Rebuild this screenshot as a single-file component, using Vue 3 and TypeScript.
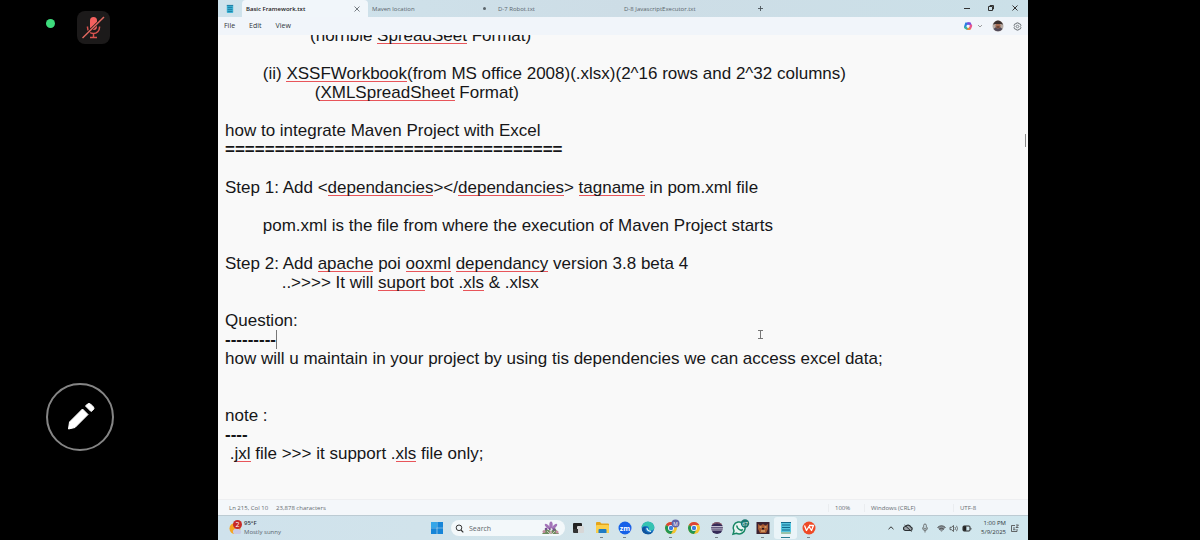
<script setup lang="ts">
import { ref } from 'vue'

interface Tab { title: string; modified?: boolean }
interface Piece { text: string; misspelt?: boolean }
interface Line { pieces: Piece[]; caret: boolean; rule: boolean }

const tabs: Tab[] = [
  { title: 'Basic Framework.txt' },
  { title: 'Maven location', modified: true },
  { title: 'D-7 Robot.txt' },
  { title: 'D-8 JavascriptExecutor.txt' },
]
const activeTab = ref(0)
const menus = ['File', 'Edit', 'View']

// Words wrapped in [[ ]] carry the spell-check underline; a trailing | marks the caret.
const source: string[] = [
  ' '.repeat(18) + '(horrible [[SpreadSeet]] Format)',
  '',
  ' '.repeat(8) + '(ii) [[XSSFWorkbook]](from MS office 2008)(.xlsx)(2^16 rows and 2^32 columns)',
  ' '.repeat(19) + '([[XMLSpreadSheet]] Format)',
  '',
  'how to integrate Maven Project with Excel',
  '='.repeat(34),
  '',
  'Step 1: Add <[[dependancies]]></[[dependancies]]> [[tagname]] in pom.xml file',
  '',
  ' '.repeat(8) + 'pom.xml is the file from where the execution of Maven Project starts',
  '',
  'Step 2: Add [[apache]] poi [[ooxml]] [[dependancy]] version 3.8 beta 4',
  ' '.repeat(12) + '..>>>> It will [[suport]] bot .[[xls]] & .xlsx',
  '',
  'Question:',
  '-'.repeat(9) + '|',
  'how will u maintain in your project by using tis dependencies we can access excel data;',
  '',
  '',
  'note :',
  '----',
  ' .[[jxl]] file >>> it support .[[xls]] file only;',
]

function parse(raw: string): Line {
  const caret = raw.endsWith('|')
  const body = caret ? raw.slice(0, -1) : raw
  const pieces = body
    .split(/(\[\[.*?\]\])/)
    .filter((t) => t.length > 0)
    .map((t) => (t.startsWith('[[') ? { text: t.slice(2, -2), misspelt: true } : { text: t }))
  return { pieces, caret, rule: /^[-=]+$/.test(body) }
}
const lines = source.map(parse)

const apps: { id: string; label: string; running?: boolean }[] = [
  { id: 'taskview', label: 'Task view' },
  { id: 'explorer', label: 'File Explorer', running: true },
  { id: 'zoom', label: 'Zoom', running: true },
  { id: 'edge', label: 'Edge' },
  { id: 'chromeM', label: 'Chrome profile', running: true },
  { id: 'chrome', label: 'Chrome' },
  { id: 'eclipse', label: 'Eclipse', running: true },
  { id: 'whatsapp', label: 'WhatsApp' },
  { id: 'photo', label: 'Game', running: true },
  { id: 'notepad', label: 'Notepad', running: true },
  { id: 'wps', label: 'WPS Office', running: true },
]
</script>

<template>
  <div class="call">
    <aside class="side">
      <div class="mic-row">
        <span class="live"></span>
        <button class="mic" aria-label="Unmute">
          <svg viewBox="0 0 33 33" width="33" height="33">
            <rect x="13" y="6" width="7" height="13" rx="3.5" fill="#f4605e" />
            <path d="M10.500 15.500v1a6 6 0 0 0 12 0v-1M16.500 22.500v4M13 26.500h7" fill="none" stroke="#d9534f" stroke-width="1.500" />
            <path d="M6 26.500 27 6" stroke="#1c1a1a" stroke-width="3" />
            <path d="M5.500 27 27 6" stroke="#e0685f" stroke-width="1.500" />
          </svg>
        </button>
      </div>
      <button class="pen" aria-label="Annotate">
        <svg viewBox="0 0 68 68" width="68" height="68">
          <circle cx="34" cy="34" r="33" fill="#000" stroke="#858585" stroke-width="2" />
          <path d="M22.500 46 23.500 39 36.500 26 42 31.500 29 44.500Z" fill="#fff" stroke="#fff" stroke-linejoin="round" />
          <path d="M39.500 23 41.500 21q1.500-1 3 0l3 3q1 1.500 0 2.500L45 28.500Z" fill="#fff" stroke="#fff" stroke-linejoin="round" />
        </svg>
      </button>
    </aside>

    <main class="desktop">
      <header class="tabbar">
        <span class="app-icon">
          <svg viewBox="0 0 10 12" width="8" height="10">
            <rect x="1" y="1" width="8" height="10" rx="1" fill="#3eb5d6" />
            <path d="M1 1.500h8M2 4h6M2 6.500h6M2 9h6" stroke="#176f96" />
          </svg>
        </span>
        <div
          v-for="(tab, i) in tabs"
          :key="tab.title"
          class="tab"
          :class="{ active: i === activeTab }"
        >
          <button class="tab-title" @click="activeTab = i">{{ tab.title }}</button>
          <button v-if="i === activeTab" class="tab-close" aria-label="Close tab">
            <svg viewBox="0 0 6 6" width="6" height="6"><path d="M.5.5l5 5M5.500.5l-5 5" stroke="#555c62" stroke-width=".8" /></svg>
          </button>
          <span v-else-if="tab.modified" class="dot"></span>
        </div>
        <button class="new-tab" aria-label="New tab">
          <svg viewBox="0 0 7 7" width="7" height="7"><path d="M3.500 1v5M1 3.500h5" stroke="#4b5359" stroke-width=".9" /></svg>
        </button>
        <div class="window-controls">
          <button aria-label="Minimize"><svg viewBox="0 0 8 8" width="8" height="8"><path d="M1 4.500h6" stroke="#333" /></svg></button>
          <button aria-label="Restore">
            <svg viewBox="0 0 8 8" width="8" height="8"><path d="M1.500 2.500h4v4h-4zM3 2.500V1.500h3.500V5H5.500" fill="none" stroke="#333" /></svg>
          </button>
          <button aria-label="Close"><svg viewBox="0 0 8 8" width="8" height="8"><path d="M1.500 1.500l5 5M6.500 1.500l-5 5" stroke="#333" /></svg></button>
        </div>
      </header>

      <nav class="menubar">
        <button v-for="m in menus" :key="m">{{ m }}</button>
        <div class="menu-right">
          <button class="copilot" aria-label="Copilot">
            <svg viewBox="0 0 10 10" width="10" height="10">
              <g fill="none" stroke-width="2.400" stroke-linecap="round">
                <path d="M2.200 5.800 3.200 2.800h2" stroke="#2a7de1" />
                <path d="M5.200 2.400 6.700 2.500 7.300 3.500" stroke="#7c4ddb" />
                <path d="M8 4.700 7 7.300" stroke="#e9568d" />
                <path d="M6.300 7.900H4.700" stroke="#f08a3c" />
                <path d="M3.500 7.400 2.300 6.500" stroke="#37b5a0" />
              </g>
              <circle cx="5" cy="5.100" r="1.400" fill="#f6f8fb" />
            </svg>
            <svg viewBox="0 0 6 6" width="6" height="6"><path d="M1 2l2 2 2-2" fill="none" stroke="#888" stroke-width=".8" /></svg>
          </button>
          <button aria-label="Account">
            <svg viewBox="0 0 12 12" width="12" height="12">
              <circle cx="6" cy="6" r="5.500" fill="#b5aaa4" />
              <path d="M1.500 9a5.500 5.500 0 0 0 9 0L8 7H4z" fill="#514a58" />
              <circle cx="6" cy="5.800" r="2.600" fill="#a86f55" />
              <path d="M1 4.500Q3 .5 6 .5t5 4L8.500 4H3.500z" fill="#3b302e" />
              <path d="M4.500 7h3" stroke="#3b2622" />
            </svg>
          </button>
          <button aria-label="Settings">
            <svg viewBox="0 0 10 10" width="9" height="9">
              <path d="M4 1h2l.5 1.200 1.400-.2 1 1.600L8 5l.9 1.400-1 1.600-1.400-.2L6 9H4l-.5-1.200L2.100 8l-1-1.600L2 5l-.9-1.400 1-1.600 1.400.2z" fill="none" stroke="#5e6469" stroke-width=".9" />
              <circle cx="5" cy="5" r="1.400" fill="none" stroke="#5e6469" stroke-width=".8" />
            </svg>
          </button>
        </div>
      </nav>

      <section class="editor">
        <div class="text" contenteditable="true" role="textbox" aria-multiline="true" aria-label="Text editor" spellcheck="false">
          <div v-for="(line, i) in lines" :key="i" class="line" :class="{ rule: line.rule }"><span
            v-for="(p, j) in line.pieces" :key="j" :class="{ misspelt: p.misspelt }">{{ p.text }}</span><i v-if="line.caret" class="caret"></i></div>
        </div>
        <span class="scroll-thumb"></span>
        <svg class="pointer" viewBox="0 0 7 11" width="7" height="11"><path d="M1 1.500h5M1 9.500h5M3.500 1.500v8" stroke="#777" fill="none" /></svg>
      </section>

      <footer class="statusbar">
        <span class="position">Ln 215, Col 10</span>
        <span class="count">23,878 characters</span>
        <span class="cell zoom">100%</span>
        <span class="cell ending">Windows (CRLF)</span>
        <span class="cell encoding">UTF-8</span>
      </footer>

      <div class="taskbar">
        <button class="weather">
          <svg viewBox="0 0 16 18" width="16" height="18">
            <circle cx="8" cy="9.500" r="5.500" fill="#f5a623" />
            <path d="M7 15a3 3 0 0 1 .5-5 3.500 3.500 0 0 1 5.500 1 2.200 2.200 0 0 1 0 4z" fill="#c9cbe8" />
            <circle cx="10.500" cy="5.500" r="4.500" fill="#c62b28" />
            <text x="10.500" y="8" text-anchor="middle" font-size="7" fill="#fff">2</text>
          </svg>
          <span class="weather-text"><b>95°F</b><span>Mostly sunny</span></span>
        </button>

        <div class="pins">
          <button class="start" aria-label="Start">
            <svg viewBox="0 0 14 14" width="14" height="14">
              <path d="M1 1h5.700v5.700H1zM7.300 1H13v5.700H7.300zM1 7.300h5.700V13H1zM7.300 7.300H13V13H7.300z" fill="#1685d8" />
              <path d="M1 1h5.700v5.700H1z" fill="#35a6e8" />
            </svg>
          </button>
          <label class="search">
            <svg viewBox="0 0 9 9" width="9" height="9"><circle cx="4" cy="3.800" r="2.800" fill="none" stroke="#333" /><path d="M6 6l2.300 2.300" stroke="#333" stroke-width="1.200" /></svg>
            <input type="text" placeholder="Search" aria-label="Search" />
            <svg viewBox="0 0 20 14" width="20" height="14">
              <path d="M1 13l4-5 5 2 4-3 4 6z" fill="#6d8b5e" />
              <g fill="#a374b8"><ellipse cx="10" cy="4" rx="1.700" ry="3.600" /><ellipse cx="6.500" cy="5.500" rx="1.500" ry="3.400" transform="rotate(-45 6.500 5.500)" /><ellipse cx="13.500" cy="5.500" rx="1.500" ry="3.400" transform="rotate(45 13.500 5.500)" /></g>
              <g fill="#76528f"><circle cx="5" cy="8" r="1.300" /><circle cx="13" cy="8.500" r="1.300" /><circle cx="9" cy="8" r="1.200" /></g>
              <g fill="#c58ba0"><circle cx="3" cy="10.500" r="1.500" /><circle cx="16" cy="11" r="1.500" /><circle cx="9.500" cy="11.500" r="1.300" /></g>
              <path d="M10 7v6M6 10l3 3M14 10l-3 3" stroke="#e9e9df" stroke-width=".7" />
            </svg>
          </label>

          <button v-for="app in apps" :key="app.id" class="pin" :class="[app.id, { running: app.running }]" :aria-label="app.label">
            <svg viewBox="0 0 20 18" width="20" height="18">
              <g v-if="app.id === 'taskview'">
                <rect x="4" y="4" width="9" height="9" rx="1" fill="#222" /><rect x="8" y="7" width="7" height="7" rx="1" fill="#d7d7d7" /><path d="M4 10h5v4H5q-1 0-1-1z" fill="#333" />
              </g>
              <g v-else-if="app.id === 'explorer'">
                <path d="M4 4q0-1 1-1h3l1.500 1.500H16q1 0 1 1V13q0 1-1 1H5q-1 0-1-1z" fill="#e5a51b" /><rect x="4" y="6" width="13" height="8" rx="1" fill="#fbd04b" /><path d="M6.500 14v-3q0-1 1-1h6q1 0 1 1v3z" fill="#1f7bc4" />
              </g>
              <g v-else-if="app.id === 'zoom'">
                <circle cx="10" cy="9" r="6.500" fill="#1560e8" /><text x="10" y="11.500" text-anchor="middle" font-size="7" font-weight="700" fill="#fff">zm</text>
              </g>
              <g v-else-if="app.id === 'edge'">
                <circle cx="10" cy="9" r="6.300" fill="#1677c9" />
                <path d="M3.700 9A6.300 6.300 0 0 1 16.300 8.500q0 3-3.500 3-2.500 0-1.800-1.500Q11 7 8 7 4.500 7 3.700 9z" fill="#35c3b1" />
                <path d="M8 8q-2 3 1 5.200 3 1.200 6-.7-2 3-5 2.800Q4 15 3.800 10 5 7 8 8z" fill="#11539c" /><path d="M9 9q0 3 4 3.300" stroke="#e1f5fa" stroke-width="1.300" fill="none" />
              </g>
              <g v-else-if="app.id === 'chrome' || app.id === 'chromeM'">
                <circle cx="10" cy="9" r="6" fill="#f4c430" />
                <path d="M10 9 4.800 6a6 6 0 0 1 10.400 0H10z" fill="#db4437" /><path d="M10 9 4.800 6a6 6 0 0 0 5.200 9l2.500-4.500z" fill="#219653" />
                <circle cx="10" cy="9" r="3" fill="#fff" /><circle cx="10" cy="9" r="2.200" fill="#3c7de0" />
                <g v-if="app.id === 'chromeM'"><circle cx="14.500" cy="4.500" r="4" fill="#6263a8" /><text x="14.500" y="6.500" text-anchor="middle" font-size="5" fill="#fff">M</text></g>
              </g>
              <g v-else-if="app.id === 'eclipse'">
                <circle cx="10" cy="9" r="6" fill="#342a57" /><path d="M4 7.500h12M4 9.200h12M4 11h12" stroke="#e7e4ed" stroke-width=".8" /><path d="M5 5.500Q10 2 15 5.500" fill="none" stroke="#a26a70" />
              </g>
              <g v-else-if="app.id === 'whatsapp'">
                <path d="M3 15.200 4 12a6 6 0 1 1 2.300 2.200z" fill="#e8f4f1" stroke="#168765" stroke-width="1.500" /><path d="M7 6.500q-.5 3 4.500 5l1.200-1.200" fill="none" stroke="#168765" stroke-width="1.600" />
                <circle cx="15" cy="4.500" r="4.200" fill="#19776e" /><text x="15" y="6.500" text-anchor="middle" font-size="5" fill="#fff">67</text>
              </g>
              <g v-else-if="app.id === 'photo'">
                <rect x="3.500" y="3" width="13" height="12" fill="#3b2230" /><path d="M5 5l2.500 1.500L10 5l2.500 1.500L15 5v5l-2 4H7l-2-4z" fill="#a65a32" /><path d="M6.500 8h2M11.500 8h2M8 12h4" stroke="#f0c78c" stroke-width="1.200" /><path d="M9 9h2v1.500H9z" fill="#241620" />
              </g>
              <g v-else-if="app.id === 'notepad'">
                <rect x="5" y="3" width="10" height="12" rx="1" fill="#54c4de" /><path d="M5 3.500h10M6 6h8M6 8.500h8M6 11h8" stroke="#12698c" stroke-width="1.200" /><path d="M5 14h10" stroke="#d8c27a" />
              </g>
              <g v-else>
                <circle cx="10" cy="9" r="6.500" fill="#ef4a26" /><path d="M5.500 6.500 7.500 11.500 10 7.500l2.500 4 2-5H10" fill="none" stroke="#fff" stroke-width="1.300" stroke-linejoin="round" />
              </g>
            </svg>
          </button>
        </div>

        <div class="tray">
          <button aria-label="Hidden icons"><svg viewBox="0 0 8 8" width="8" height="8"><path d="M1.500 5.200 4 2.800l2.500 2.400" fill="none" stroke="#333" /></svg></button>
          <button class="cloud" aria-label="OneDrive">
            <svg viewBox="0 0 10 10" width="10" height="10"><path d="M2.500 7.500a2 2 0 0 1 0-4 3 3 0 0 1 5.300.5 1.800 1.800 0 0 1 0 3.500z" fill="#9da4a9" stroke="#2b2f32" stroke-width="1.200" /><path d="M1.500 2 8.500 8.500" stroke="#2b2f32" /></svg>
          </button>
          <button class="tray-mic" aria-label="Microphone">
            <svg viewBox="0 0 8 10" width="8" height="10"><rect x="2.700" y="1" width="2.600" height="5" rx="1.300" fill="none" stroke="#555" stroke-width=".8" /><path d="M1.500 4.500q0 3 2.500 3t2.500-3M4 7.500v2" fill="none" stroke="#555" stroke-width=".8" /></svg>
          </button>
          <button class="system" aria-label="Network, volume and battery">
            <svg viewBox="0 0 9 9" width="9" height="9"><path d="M.5 3.500q4-3.500 8 0L4.500 8z" fill="#8c959b" /><path d="M.5 3.500q4-3.500 8 0M2 5.300q2.500-2 5 0" fill="none" stroke="#444" stroke-width=".9" /></svg>
            <svg viewBox="0 0 10 9" width="10" height="9"><path d="M1 3.300h1.500L4.500 1.500v6l-2-1.800H1z" fill="none" stroke="#444" stroke-width=".8" /><path d="M6 3q1 1.500 0 3M7.500 1.800q2 2.700 0 5.400" fill="none" stroke="#555" stroke-width=".8" /></svg>
            <svg viewBox="0 0 10 9" width="10" height="9"><rect x="1" y="2" width="7" height="5" rx="1" fill="none" stroke="#222" /><path d="M1.500 2.500h2.500v4H1.500zM9 4v1.500" fill="#222" stroke="#222" stroke-width=".7" /></svg>
          </button>
          <button class="clock"><span>1:00 PM</span><span>5/9/2025</span></button>
          <button aria-label="Notifications">
            <svg viewBox="0 0 9 9" width="9" height="9"><path d="M5 1.500H1.500v6h5.500V5M3 4h2M3 5.700h2.500M6 1h2.500L6 3.500h2.500" fill="none" stroke="#444" stroke-width=".8" /></svg>
          </button>
        </div>
      </div>
    </main>
    <aside class="gutter"></aside>
  </div>
</template>

<style>
body {
  margin: 0;
  background: #000;
}
</style>

<style scoped>
.call {
  display: flex;
  min-height: 100vh;
  background: #000;
  font-family: "Open Sans", "Noto Sans", sans-serif;
  font-size: 6px;
  color: #30363a;
}
button {
  display: flex;
  align-items: center;
  justify-content: center;
  padding: 0;
  border: 0;
  background: none;
  font: inherit;
  color: inherit;
}
svg {
  display: block;
  flex: none;
}
.side {
  box-sizing: border-box;
  width: 218px;
  flex: none;
  display: flex;
  flex-direction: column;
  justify-content: space-between;
  align-items: flex-start;
  padding: 11px 46px 89px;
}
.gutter {
  width: 172px;
  flex: none;
}
.mic-row {
  display: flex;
  gap: 22px;
}
.live {
  width: 9px;
  height: 9px;
  margin-top: 8px;
  border-radius: 50%;
  background: #3ddc7c;
}
.mic {
  border-radius: 8px;
  background: #1c1a1a;
}
.desktop {
  flex: 1;
  min-width: 0;
  display: flex;
  flex-direction: column;
  background: #f9f9f9;
}
.tabbar {
  display: flex;
  height: 17px;
  background: linear-gradient(90deg, #cfe3ec, #cddde6 50%, #cbe0e8);
}
.app-icon {
  width: 24px;
  display: flex;
  align-items: center;
  justify-content: center;
}
.tab {
  display: flex;
  align-items: center;
  justify-content: space-between;
  box-sizing: border-box;
  width: 126px;
  padding: 0 8px 0 4px;
  color: #5a656c;
}
.tab.active {
  border-radius: 4px 4px 0 0;
  background: #f1f6fa;
  color: #1d2225;
  font-weight: 600;
}
.dot {
  width: 3px;
  height: 3px;
  border-radius: 50%;
  background: #5b656b;
}
.new-tab {
  margin-left: 11px;
}
.window-controls {
  display: flex;
  gap: 16px;
  margin-left: auto;
  padding: 0 9px 2px 0;
}
.menubar {
  display: flex;
  align-items: center;
  gap: 14px;
  height: 18px;
  padding: 0 6px;
  background: #f1f5fa;
  font-size: 7px;
  line-height: 8px;
}
.menu-right {
  display: flex;
  align-items: center;
  gap: 9px;
  margin-left: auto;
}
.copilot {
  gap: 4px;
}
.editor {
  position: relative;
  flex: 1;
  overflow: hidden;
  background: #f9f9f9;
}
.text {
  margin-top: -9px;
  padding: 0 7px;
  outline: 0;
  font-family: "Liberation Sans", Arial, sans-serif;
  font-size: 17px;
  line-height: 19px;
  color: #161618;
  white-space: nowrap;
}
.line {
  height: 19px;
  white-space: pre;
}
.rule {
  font-weight: 700;
}
.misspelt {
  background: linear-gradient(#e8555a, #e8555a) 0 calc(100% - 1px) / 100% 1px no-repeat;
}
.caret {
  display: inline-block;
  width: 1px;
  height: 19px;
  vertical-align: bottom;
  background: #777;
}
.scroll-thumb {
  position: absolute;
  top: 99px;
  right: 2px;
  width: 1px;
  height: 13px;
  background: #8a8a8a;
}
.pointer {
  position: absolute;
  left: calc(67% - 4px);
  top: 294px;
}
.statusbar {
  display: flex;
  align-items: center;
  height: 15px;
  padding: 0 0 0 11px;
  border-top: 1px solid #eeeff1;
  background: #f4f7fa;
  color: #646b70;
}
.count {
  margin-left: 8px;
}
.cell {
  box-sizing: border-box;
  padding-left: 6px;
  border-left: 1px solid #eaedf0;
}
.zoom {
  width: 36px;
  margin-left: auto;
}
.ending {
  width: 89px;
}
.encoding {
  width: 75px;
}
.taskbar {
  display: grid;
  grid-template-columns: 1fr auto 1fr;
  align-items: center;
  box-sizing: border-box;
  height: 25px;
  border-top: 1px solid #bccbd3;
  background: linear-gradient(90deg, #cfe2ec, #d3e4ea 50%, #d0e7ee);
}
.weather {
  justify-self: start;
  gap: 1px;
  margin-left: 9px;
}
.weather-text {
  display: flex;
  flex-direction: column;
  line-height: 9px;
  text-align: left;
  color: #59656c;
}
.weather-text b {
  font-weight: 600;
  color: #333b40;
}
.pins {
  display: flex;
  align-items: center;
  padding-left: 4px;
}
.search {
  display: flex;
  align-items: center;
  box-sizing: border-box;
  width: 114px;
  height: 16px;
  margin: 0 2px 0 7px;
  padding: 0 4px;
  border-radius: 8px;
  background: #f3f8fa;
}
.search input {
  flex: 1;
  min-width: 0;
  padding: 0 5px;
  border: 0;
  outline: 0;
  background: none;
  font: inherit;
  font-size: 7px;
}
.search input::placeholder {
  color: #5d666b;
  opacity: 1;
}
.pin {
  position: relative;
  width: 23px;
  height: 22px;
  border-radius: 3px;
}
.pin.notepad {
  background: #eaf4f8;
}
.pin.running::after {
  content: "";
  position: absolute;
  bottom: 1px;
  left: 10px;
  width: 3px;
  height: 1px;
  background: #7a858b;
}
.pin.notepad::after {
  left: 7px;
  width: 9px;
  background: #2a7c92;
}
.tray {
  display: flex;
  align-items: center;
  justify-self: end;
  margin-right: 9px;
}
.cloud {
  margin-left: 8px;
}
.tray-mic {
  margin: 0 8px;
}
.system {
  gap: 3px;
}
.clock {
  flex-direction: column;
  align-items: flex-end;
  margin: 0 4px 0 9px;
  line-height: 9px;
}
</style>
